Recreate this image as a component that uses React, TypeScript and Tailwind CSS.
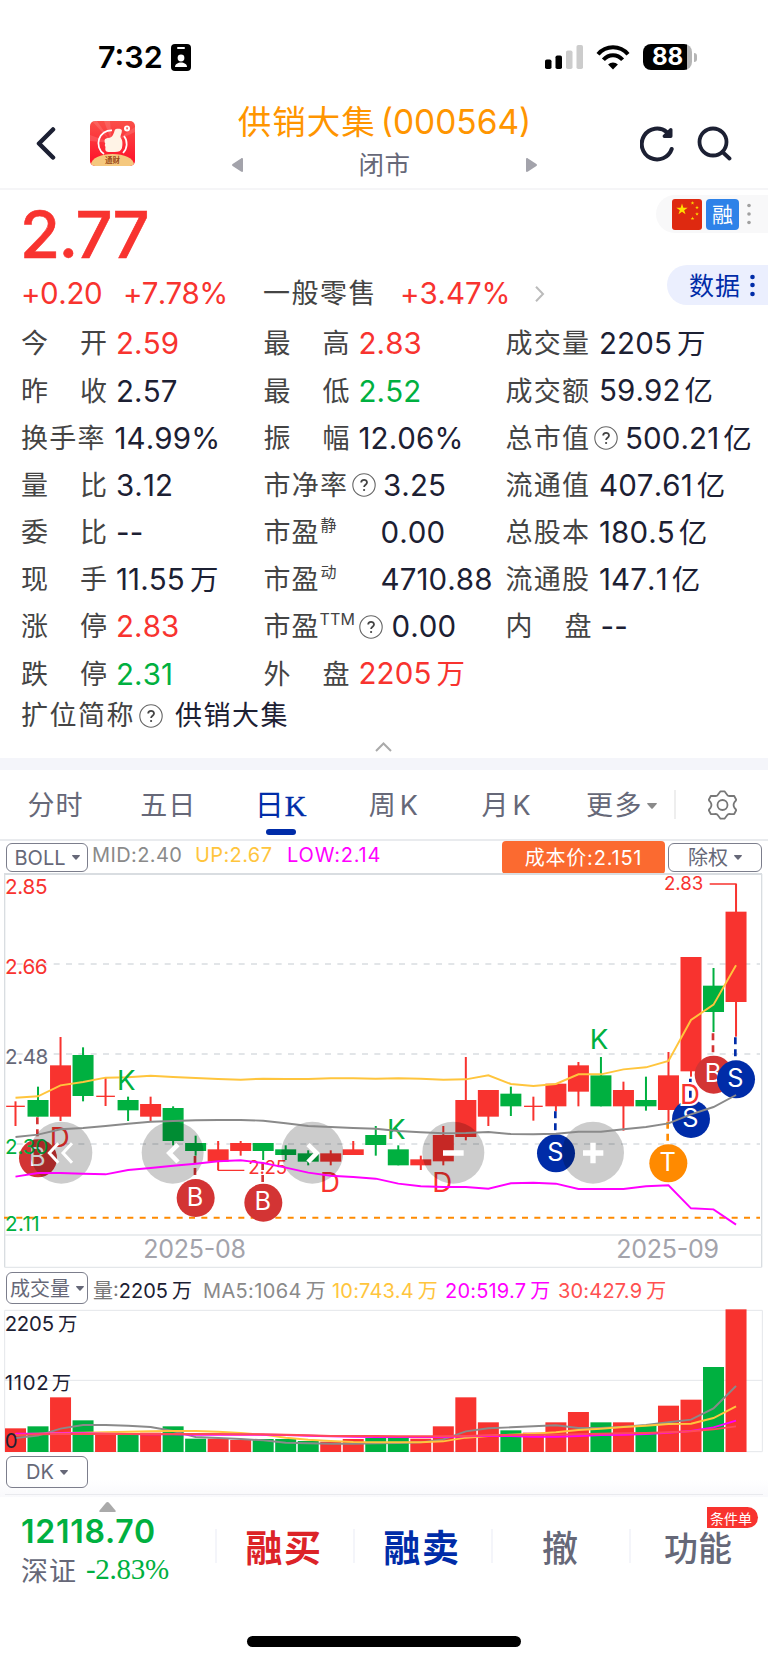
import type { ReactNode } from "react";

const RED = "#f8332f";
const GREEN = "#00b040";
const PITCH = 67.55;
const cx = (i: number) => 46.5 + i * PITCH;

// [up, bodyTop, bodyBottom, high, low]
const candles: [number, number, number, number, number][] = [
  [1, 707, 711, 694, 768], [0, 690, 740, 650, 740], [1, 586, 740, 501, 753], [0, 555, 678, 532, 694],
  [1, 677, 681, 622, 708], [0, 690, 721, 680, 753], [1, 702, 740, 680, 753], [0, 714, 813, 709, 826],
  [0, 819, 843, 797, 857], [1, 838, 875, 813, 900], [1, 819, 843, 813, 857], [0, 819, 843, 819, 870],
  [0, 838, 855, 826, 870], [0, 850, 875, 841, 886], [1, 850, 875, 841, 886], [1, 838, 855, 813, 855],
  [0, 795, 825, 768, 857], [0, 838, 886, 826, 886], [1, 868, 886, 857, 900], [1, 795, 874, 768, 886],
  [1, 690, 801, 561, 811], [1, 660, 740, 660, 768], [0, 671, 709, 650, 738], [1, 707, 711, 680, 752],
  [1, 641, 709, 641, 724], [1, 586, 665, 576, 709], [0, 616, 709, 561, 709], [1, 660, 709, 635, 782],
  [0, 690, 709, 620, 722], [1, 616, 720, 546, 755], [1, 261, 604, 261, 620], [0, 347, 426, 294, 486],
  [1, 125, 396, 42, 500],
];
const up = [683, 679, 646, 636, 623, 622, 617, 621, 624, 627, 629, 626, 627, 627, 625, 625, 626, 625, 626, 629, 628, 616, 642, 648, 642, 613, 613, 598, 592, 573, 450, 404, 286];
const mid = [801, 794, 778, 774, 768, 761, 755, 753, 751, 750, 750, 752, 760, 768, 771, 774, 776, 783, 787, 790, 789, 786, 792, 793, 791, 785, 785, 778, 771, 760, 733, 711, 675];
const low = [920, 909, 909, 911, 913, 900, 894, 887, 881, 874, 871, 879, 893, 908, 917, 921, 926, 941, 949, 951, 951, 956, 940, 938, 941, 957, 957, 957, 949, 946, 1015, 1018, 1064];
const volumes = [505, 499, 412, 481, 518, 525, 518, 499, 536, 536, 540, 537, 537, 543, 545, 537, 534, 534, 536, 499, 412, 487, 511, 518, 487, 456, 487, 487, 498, 437, 419, 321, 148];
const ma5 = [534, 527, 506, 495, 495, 497, 501, 513, 531, 534, 537, 541, 548, 550, 551, 551, 550, 549, 547, 538, 514, 505, 502, 499, 496, 504, 504, 500, 495, 487, 479, 445, 378];
const ma10 = [523, 521, 519, 518, 517, 515, 514, 513, 513, 515, 519, 524, 533, 539, 543, 546, 547, 547, 547, 544, 533, 528, 524, 521, 517, 510, 506, 501, 497, 492, 491, 474, 439];
const ma20 = [521, 521, 520, 520, 521, 522, 523, 523, 524, 524, 524, 524, 525, 527, 529, 530, 531, 531, 531, 531, 529, 527, 528, 530, 530, 528, 525, 524, 522, 518, 513, 502, 482];
const ma30 = [525, 523, 522, 522, 522, 522, 522, 522, 522, 522, 523, 523, 524, 526, 528, 528, 528, 529, 529, 529, 528, 526, 525, 525, 524, 523, 521, 520, 519, 517, 514, 508, 499];

function Series({ data, color }: { data: number[]; color: string }) {
  return <polyline points={data.map((y, i) => `${cx(i)},${y}`).join(" ")} fill="none" stroke={color} strokeWidth={5.8} />;
}

function Label({ x, y, w, size = 62, color, children }: { x: number; y: number; w?: number; size?: number; color: string; children: string }) {
  return (
    <text x={x} y={y} fontSize={size} fill={color} textLength={w} lengthAdjust="spacing">
      {children}
    </text>
  );
}

function Marker({ x, y, color, from, children }: { x: number; y: number; color: string; from?: number; children: string }) {
  return (
    <g>
      {from !== undefined && <line x1={x - 2} x2={x - 2} y1={from} y2={y - 50} stroke={color} strokeWidth={8} strokeDasharray="21 15" />}
      <circle cx={x} cy={y} r={57} fill={color} />
      <text x={x - 2} y={y + 23} fontSize={76} fill="#fff" textAnchor="middle">
        {children}
      </text>
    </g>
  );
}

function PriceChart() {
  const blue = "#002ca8";
  const red = "#d33434";
  const orange = "#ff8a00";
  return (
    <svg className="block h-[400px] w-[768px]" viewBox="0 0 2304 1200">
      <g fill="none" stroke="#d9dde1">
        <path d="M12 12H2286" strokeWidth={6} />
        <path d="M14 12V1192M2285 12V1192" strokeWidth={4} />
        <path d="M14 1095H2285M14 1192H2285" strokeWidth={4} stroke="#e4e7ea" />
        <path d="M50 282H2280M50 552H2280M50 822H2280" strokeWidth={5} strokeDasharray="18 19" />
      </g>
      <path d="M12 1043H2280" stroke={orange} strokeWidth={6} strokeDasharray="18 19" />
      {candles.map(([isUp, t, b, h, l], i) => {
        const w = b - t < 6 ? 56 : 63;
        const c = isUp ? RED : GREEN;
        return (
          <g key={i} fill={c}>
            <rect x={cx(i) - 3} y={h} width={6} height={l - h} />
            <rect x={cx(i) - w / 2} y={t} width={w} height={b - t} />
          </g>
        );
      })}
      <path d="M655 885V901H733M2129 42H2210" fill="none" stroke={RED} strokeWidth={4} />
      <Series data={up} color="#ffc53d" />
      <Label x={15} y={72} w={128} color={RED}>2.85</Label>
      <Label x={15} y={311} w={128} color={RED}>2.66</Label>
      <Label x={15} y={581} w={130} color="#666878">2.48</Label>
      <Label x={15} y={1084} w={104} color={GREEN}>2.11</Label>
      <Label x={1992} y={61} w={118} size={56} color={RED}>2.83</Label>
      <Label x={745} y={913} w={116} size={56} color={RED}>2.25</Label>
      <Marker x={114} y={865} color={red} from={742}>B</Marker>
      <Marker x={587} y={984} color={red} from={858}>B</Marker>
      <Marker x={790} y={998} color={red} from={879}>B</Marker>
      <Marker x={2141} y={614} color={red} from={490}>B</Marker>
      <Marker x={1668} y={850} color={blue} from={724}>S</Marker>
      <Marker x={2073} y={747} color={blue} from={626}>S</Marker>
      <Marker x={2208} y={628} color={blue} from={502}>S</Marker>
      <Marker x={2005} y={880} color={orange} from={755}>T</Marker>
      <Label x={15} y={852} w={130} color={GREEN}>2.30</Label>
      <g fontSize={83} fill={RED} textAnchor="middle">
        <text x={179} y={832}>D</text>
        <text x={990} y={966}>D</text>
        <text x={1327} y={966}>D</text>
        <text x={2070} y={703} stroke="#fff" strokeWidth={12} paintOrder="stroke">D</text>
      </g>
      <g fontSize={83} fill={GREEN} textAnchor="middle">
        <text x={379} y={659}>K</text>
        <text x={1189} y={806}>K</text>
        <text x={1797} y={536}>K</text>
      </g>
      <g fill="#000" fillOpacity={0.2}>
        <circle cx={184} cy={848} r={93} />
        <circle cx={518} cy={848} r={93} />
        <circle cx={937} cy={848} r={93} />
        <circle cx={1360} cy={848} r={93} />
        <circle cx={1779} cy={848} r={93} />
      </g>
      <Series data={mid} color="#8a8a8a" />
      <Series data={low} color="#ff00ff" />
      <g fill="none" stroke="#fff">
        <path d="M175 820L148 849L175 878M216 820L189 849L216 878" strokeWidth={9} />
        <path d="M534 824L508 849L534 876M924 824L950 849L924 876" strokeWidth={14} />
        <path d="M1329 849H1391M1749 849H1810M1779 818V880" strokeWidth={16} />
      </g>
      <Label x={430} y={1163} w={308} size={75} color="#a3a3ab">2025-08</Label>
      <Label x={1849} y={1163} w={308} size={75} color="#a3a3ab">2025-09</Label>
    </svg>
  );
}

function VolumeChart() {
  return (
    <svg className="block h-[145px] w-[768px]" viewBox="0 144 2304 435">
      <path d="M14 575V151H2287V575H14M14 361H2287" fill="none" stroke="#e4e6ea" strokeWidth={3} />
      {volumes.map((t, i) => (
        <rect key={i} x={cx(i) - 31.5} y={t} width={63} height={576 - t} fill={candles[i][0] ? RED : GREEN} />
      ))}
      <Series data={ma5} color="#8a8a8a" />
      <Series data={ma10} color="#ffc53d" />
      <Series data={ma20} color="#ff00ff" />
      <Series data={ma30} color="#ff4a5a" />
      <Label x={14} y={213} w={148} size={61} color="#1c2033">2205</Label>
      <Label x={174} y={213} size={58} color="#1c2033">万</Label>
      <Label x={14} y={391} w={132} size={61} color="#1c2033">1102</Label>
      <Label x={155} y={391} size={58} color="#1c2033">万</Label>
      <Label x={14} y={563} size={61} color="#1c2033">0</Label>
    </svg>
  );
}

function Help() {
  return (
    <svg className="h-6 w-6 shrink-0" viewBox="0 0 24 24" fill="none" stroke="#666">
      <circle cx="12" cy="12" r="11.2" strokeWidth="1.1" />
      <path d="M9.2 9.6c0-3.600 5.800-3.600 5.800-.1 0 2.200-2.900 2.400-2.900 4.600" stroke="#444" strokeWidth="1.8" />
      <circle cx="12.1" cy="17" r="1.1" fill="#444" stroke="none" />
    </svg>
  );
}

function Caret({ className = "h-[6px] w-[10px]", color = "#666878" }: { className?: string; color?: string }) {
  return (
    <svg className={`shrink-0 ${className}`} viewBox="0 0 10 6">
      <path d="M.7 0h8.6c.6 0 .8.6.4 1L5.7 5.4a1 1 0 0 1-1.4 0L.3 1C-.1.6.1 0 .7 0z" fill={color} />
    </svg>
  );
}

type Cell = { label: string; sup?: string; help?: boolean; value: string; unit?: string; color?: string; pad?: string };
const r = "text-[#f8332f]";
const g = "text-[#00b040]";
const rows: Cell[][] = [
  [{ label: "今开", value: "2.59", color: r }, { label: "最高", value: "2.83", color: r }, { label: "成交量", value: "2205", unit: "万" }],
  [{ label: "昨收", value: "2.57" }, { label: "最低", value: "2.52", color: g }, { label: "成交额", value: "59.92", unit: "亿" }],
  [{ label: "换手率", value: "14.99%", pad: "pl-[10px]" }, { label: "振幅", value: "12.06%" }, { label: "总市值", help: true, value: "500.21", unit: "亿", pad: "pl-[7px]" }],
  [{ label: "量比", value: "3.12" }, { label: "市净率", help: true, value: "3.25", pad: "pl-[7px]" }, { label: "流通值", value: "407.61", unit: "亿" }],
  [{ label: "委比", value: "--" }, { label: "市盈", sup: "静", value: "0.00", pad: "pl-[43px]" }, { label: "总股本", value: "180.5", unit: "亿" }],
  [{ label: "现手", value: "11.55", unit: "万" }, { label: "市盈", sup: "动", value: "4710.88", pad: "pl-[43px]" }, { label: "流通股", value: "147.1", unit: "亿" }],
  [{ label: "涨停", value: "2.83", color: r }, { label: "市盈", sup: "TTM", help: true, value: "0.00", pad: "pl-[9px]" }, { label: "内盘", value: "--" }],
  [{ label: "跌停", value: "2.31", color: g }, { label: "外盘", value: "2205", unit: "万", color: r }],
];

function Quote({ c }: { c: Cell }) {
  const wide = c.label.length === 3;
  return (
    <div className="flex items-center whitespace-nowrap">
      {c.sup ? (
        <div className="flex pt-[2px]">
          <span className="text-[27px] tracking-[1px] text-[#444]">{c.label}</span>
          <span className={c.sup === "TTM" ? "w-[39px] text-[16px] tracking-[0.2px] text-[#444]" : "ml-[1px] w-[17px] text-[16px] text-[#444]"}>{c.sup}</span>
        </div>
      ) : (
        <div className={`flex justify-between pt-[2px] text-[27px] text-[#444] ${wide ? "w-[83.500px]" : "w-[86px]"}`}>
          {c.label.split("").map((ch) => (
            <span key={ch}>{ch}</span>
          ))}
        </div>
      )}
      {c.help && <span className={c.sup ? "flex" : "ml-[5px] flex"}><Help /></span>}
      <span className={`text-[29.500px] tracking-[0.100px] [font-kerning:none] ${c.color ?? "text-[#1c2033]"} ${c.pad ?? (wide ? "pl-[10px]" : "pl-[9px]")}`}>
        {c.value}
        {c.unit && <span className={`text-[28.500px] ${c.unit === "万" ? "ml-[5px]" : "ml-[4px]"}`}>{c.unit}</span>}
      </span>
    </div>
  );
}

function Select({ className, children }: { className: string; children: ReactNode }) {
  return (
    <div className={`flex shrink-0 items-center justify-center gap-[6px] rounded-[6px] border-[1.5px] border-[#7c7e8c] text-[20px] text-[#666878] ${className}`}>
      <span className="whitespace-nowrap">{children}</span>
      <Caret className="h-[5px] w-[8px]" />
    </div>
  );
}

function Tab({ children, active }: { children: ReactNode; active?: boolean }) {
  return (
    <div className={`flex h-full w-[112.8px] flex-col items-center ${active ? "text-[#002ca8]" : "text-[#666878]"}`}>
      <span className="mt-[15px] h-[42px] whitespace-nowrap text-[27px] leading-[42px] tracking-[1px]">{children}</span>
      {active && <span className="mt-[2px] h-[6px] w-[30px] shrink-0 rounded-[3px] bg-[#002ca8]" />}
    </div>
  );
}

function Unit() {
  return <span className="ml-[4px]">万</span>;
}

function Star({ x, y, s }: { x: number; y: number; s: number }) {
  return <path transform={`translate(${x} ${y}) scale(${s})`} d="M0-1L.225-.309.951-.309.363.118.588.809 0 .382-.588.809-.363.118-.951-.309-.225-.309z" fill="#ffde00" />;
}

export default function App() {
  return (
    <div className="flex h-[1663px] w-[768px] flex-col overflow-hidden bg-white font-['Inter','Noto_Sans_CJK_SC',sans-serif]">
      {/* Status bar */}
      <div className="flex h-[96px] shrink-0 items-center pl-[98px] pt-[18px]">
        <span className="w-[73px] whitespace-nowrap text-[30.500px] font-semibold text-black">7:32</span>
        <svg className="h-[27px] w-[20px]" viewBox="0 0 20 27">
          <rect width="20" height="27" rx="4" fill="#000" />
          <rect x="6" y="3" width="8" height="2" rx="1" fill="#fff" />
          <circle cx="10" cy="14" r="3.4" fill="#fff" />
          <path d="M4 23c0-6 12-6 12 0z" fill="#fff" />
        </svg>
        <svg className="ml-[354px] h-[24px] w-[38px]" viewBox="0 0 38 24">
          <rect x="0" y="14.500" width="6.500" height="9.500" rx="1.800" />
          <rect x="10.500" y="10.500" width="6.500" height="13.500" rx="1.800" />
          <rect x="21" y="5.500" width="6.500" height="18.500" rx="1.800" fill="#ccc" />
          <rect x="31.500" y="0" width="6.500" height="24" rx="1.800" fill="#ccc" />
        </svg>
        <svg className="ml-[13px] h-[25px] w-[34px]" viewBox="0 0 34 25">
          <g fill="none" stroke="#000" strokeWidth="4">
            <path d="M2 9.200C10-.1 24-.1 32 9.200" />
            <path d="M7.400 14.700c5.300-6 13.900-6 19.200 0" />
          </g>
          <path d="M17 24.500l-4.900-5c2.600-2.700 7.200-2.700 9.800 0z" />
        </svg>
        <div className="ml-[13px] flex h-[26px] w-[49px] items-center justify-center rounded-[8px] bg-[linear-gradient(to_right,#000_89%,#b5b5b5_89%)] text-[24px] font-bold leading-none text-white">88</div>
        <div className="ml-[2px] h-[9px] w-[3px] rounded-r-full bg-[#b5b5b5]" />
      </div>

      {/* Header */}
      <div className="flex h-[94px] shrink-0 border-b-2 border-[#f5f5f7]">
        <div className="flex w-[232px] pl-[36px] pt-[25px]">
          <svg className="mt-[5px] h-[35px] w-[21px]" viewBox="0 0 21 35" fill="none" stroke="#1c2033" strokeWidth="4.500" strokeLinecap="round" strokeLinejoin="round">
            <path d="M17 3.500L3 17.500 17 31.500" />
          </svg>
          <svg className="ml-[33px] h-[45px] w-[45px]" viewBox="0 0 45 45">
            <defs>
              <linearGradient id="logo" x2="0" y2="1"><stop stopColor="#fa5048" /><stop offset="1" stopColor="#ff0d28" /></linearGradient>
              <clipPath id="clip"><rect width="45" height="45" rx="5" /></clipPath>
            </defs>
            <g clipPath="url(#clip)">
              <rect width="45" height="45" fill="url(#logo)" />
              <path d="M22 22L2 0h5zM22 22L14 0h6zM22 22L45 6v5zM22 22L0 14v6z" fill="#fff" opacity=".13" />
              <path d="M22 9.300A13 13 0 0 0 14 33M34 15a13 13 0 0 1-1 17" fill="none" stroke="#fff" strokeWidth="1.700" />
              <path d="M14.500 19.500c0-2 2.500-2.800 5-2.800 4.500-.6 4.500-7.500 6-8.400 2-.8 5.300-.6 6.300.7.500 2.800-2 6-1 8 2 2 2 7 1 10.500-1 2.500-3 3.500-7 3.500-5 0-9.500 1-9.500-3 0-1 .3-1.500 0-2.500-.7-1-.6-2 0-2.800-.8-1.200-.6-2-.8-3.200z" fill="#fff3e6" />
              <circle cx="37" cy="7.500" r="3" fill="#fff" />
              <path d="M36 6.500h2.200L37 9z" fill="#f33" />
              <ellipse cx="22.500" cy="43.500" rx="21.500" ry="10.500" fill="#f5c87e" />
            </g>
            <text x="22.500" y="41.500" fontSize="7.500" fontWeight="700" textAnchor="middle" fill="#9a4a18">通财</text>
          </svg>
        </div>
        <div className="flex w-[305px] flex-col">
          <div className="flex h-[53px] items-center justify-center whitespace-nowrap text-[#ff9500]">
            <span className="text-[33.500px] tracking-[1px]">供销大集</span>
            <span className="ml-[5px] text-[33.500px]">(000564)</span>
          </div>
          <div className="flex h-[32px] items-center justify-between">
            <svg className="h-[14px] w-[11px]" viewBox="0 0 11 14"><path d="M11 1v12c0 1-1 1.200-2 .6L.6 8a1.300 1.300 0 0 1 0-2L9 .4c1-.6 2-.4 2 .6z" fill="#a3a3ab" /></svg>
            <span className="text-[25.500px] tracking-[0.500px] text-[#666878]">闭市</span>
            <svg className="h-[14px] w-[11px]" viewBox="0 0 11 14"><path d="M0 1v12c0 1 1 1.200 2 .6L10.400 8a1.300 1.300 0 0 0 0-2L2 .4C1-.2 0 0 0 1z" fill="#a3a3ab" /></svg>
          </div>
        </div>
        <div className="flex flex-1 pl-[103px] pt-[29px]">
          <svg className="h-[37px] w-[36px]" viewBox="0 0 36 37" fill="none" stroke="#1c2033" strokeWidth="4" strokeLinecap="round">
            <path d="M31.700 24A15.400 15.400 0 1 1 27 7.200" />
            <path d="M30.800 4.800v6.400h-6.500z" strokeLinejoin="round" fill="#1c2033" strokeWidth="3.400" />
          </svg>
          <svg className="ml-[20px] h-[37px] w-[36px]" viewBox="0 0 36 37" fill="none" stroke="#1c2033" strokeWidth="3.800" strokeLinecap="round">
            <circle cx="17" cy="17" r="13.500" />
            <path d="M26.500 27l7 6.500" />
          </svg>
        </div>
      </div>

      {/* Quote summary */}
      <div className="flex h-[131px] shrink-0 justify-between">
        <div className="flex flex-col">
          <div className="flex h-[87px] items-center pl-[20px] pt-[2px] text-[65px] font-medium leading-none tracking-[-1.500px] text-[#f8332f] [-webkit-text-stroke:0.600px_#f8332f]">2.77</div>
          <div className="flex h-[32px] items-center whitespace-nowrap pl-[21px] text-[29.500px] tracking-[-0.100px] text-[#f8332f] [font-kerning:none]">
            <span className="w-[102px] tracking-[-0.400px]">+0.20</span>
            <span className="w-[140px] tracking-[-0.700px]">+7.78%</span>
            <span className="w-[137px] pt-[2px] text-[27px] tracking-[1.500px] text-[#444]">一般零售</span>
            <span className="w-[135px]">+3.47%</span>
            <svg className="mt-[2px] h-[16px] w-[10px]" viewBox="0 0 10 16" fill="none" stroke="#bbb" strokeWidth="2"><path d="M1 .7L8 8l-7 7.300" /></svg>
          </div>
        </div>
        <div className="flex flex-col items-end pt-[5px]">
          <div className="flex h-[38px] w-[112px] items-center rounded-l-full bg-[#f8f8f9] pl-[16px]">
            <svg className="h-[31px] w-[30px]" viewBox="0 0 30 31">
              <rect width="30" height="31" rx="3" fill="#de2910" />
              <Star x={10} y={10.500} s={6} /><Star x={20.500} y={4} s={2} /><Star x={25} y={8.500} s={2} /><Star x={25} y={15} s={2} /><Star x={20.500} y={19.500} s={2} />
            </svg>
            <span className="ml-[4px] flex h-[31px] w-[33px] items-center justify-center rounded-[4px] bg-[#2e82e8] pt-px text-[21px] text-white">融</span>
            <svg className="ml-[8px] h-[22px] w-[4px]" viewBox="0 0 4 22" fill="#a0a0a0"><circle cx="2" cy="2.500" r="1.800" /><circle cx="2" cy="11" r="1.800" /><circle cx="2" cy="19.500" r="1.800" /></svg>
          </div>
          <div className="mt-[32px] flex h-[40px] w-[101px] items-center rounded-l-full bg-[#ebeffe] pl-[22px] text-[25px] tracking-[1px] text-[#002ca8]">
            <span className="w-[61px] pt-[3px]">数据</span>
            <svg className="h-[24px] w-[5px]" viewBox="0 0 5 24" fill="#002ca8"><circle cx="2.500" cy="4" r="2.300" /><circle cx="2.500" cy="12" r="2.300" /><circle cx="2.500" cy="21" r="2.300" /></svg>
          </div>
        </div>
      </div>

      {/* Quote table */}
      <div className="-mt-px grid shrink-0 auto-rows-[47.180px] grid-cols-[242.500px_242px_1fr] pl-[21px]">
        {rows.flat().map((c) => (
          <Quote key={c.label + (c.sup ?? "")} c={c} />
        ))}
      </div>
      <div className="flex h-[35px] shrink-0 items-center pl-[21px] pt-[2px] text-[27px] tracking-[1.500px] text-[#444]">
        <span>扩位简称</span>
        <span className="ml-[4px] mr-[12px] flex"><Help /></span>
        <span className="text-[#1c2033]">供销大集</span>
      </div>
      <div className="flex h-[26px] shrink-0 items-center justify-center">
        <svg className="mr-[2px] mt-[4px] h-[10px] w-[17px]" viewBox="0 0 17 10" fill="none" stroke="#aaa" strokeWidth="2"><path d="M1 9l7.500-7.500L16 9" /></svg>
      </div>
      <div className="h-[12px] shrink-0 bg-[#f4f5fa]" />

      {/* Period tabs */}
      <div className="-ml-px flex h-[71px] shrink-0 items-center border-b-2 border-[#e9ebee]">
        <Tab>分时</Tab>
        <Tab>五日</Tab>
        <Tab active><span className="text-[29px]">日</span><span className="font-['Liberation_Serif',serif] text-[30px] [-webkit-text-stroke:0.400px_#002ca8]">K</span></Tab>
        <Tab>周<span className="ml-[3px]">K</span></Tab>
        <Tab>月<span className="ml-[3px]">K</span></Tab>
        <div className="flex items-center gap-[4px] pl-[23px] pt-[2px] text-[27px] tracking-[1.500px] text-[#666878]">更多<Caret color="#8a8a8a" /></div>
        <div className="ml-[17px] h-[29px] w-[2px] bg-[#eee]" />
        <svg className="ml-[32px] h-[30px] w-[29px]" viewBox="0 0 29 30" fill="none" stroke="#777" strokeWidth="1.800" strokeLinejoin="round">
          <path d="M12.500 1.300h4l3.200 4.200c1 .6 1.900.7 3 .3l3.500.2 2 3.700c-.1.800-.6 1.500-1.600 2.300-1.100 1.600-1.100 4.400 0 6 1 .8 1.500 1.500 1.600 2.300l-2 3.700-3.500.2c-1.100-.4-2-.3-3 .3l-3.200 4.200h-4l-3.200-4.200c-1-.6-1.900-.7-3-.3l-3.500-.2-2-3.700c.1-.8.600-1.500 1.600-2.300 1.100-1.600 1.100-4.400 0-6C1.400 11.200.9 10.500.8 9.700l2-3.700 3.500-.2c1.100.4 2 .3 3-.3z" />
          <circle cx="14.500" cy="15" r="5" />
        </svg>
      </div>

      {/* Indicator row */}
      <div className="flex h-[29px] shrink-0 pl-[6px]">
        <Select className="mt-[2px] h-[29px] w-[82px]">BOLL</Select>
        <div className="flex h-[27px] w-[414px] items-center whitespace-nowrap pl-[4px] text-[20px] tracking-[0.400px]">
          <span className="w-[103px] text-[#8a8a8a]">MID:2.40</span>
          <span className="w-[92px] text-[#ffc53d]">UP:2.67</span>
          <span className="tracking-[0.800px] text-[#ff00ff]">LOW:2.14</span>
        </div>
        <div className="flex h-[33px] w-[163px] shrink-0 items-center justify-center rounded-[4px] bg-[#fb6a30] text-[20px] tracking-[0.800px] text-white">成本价:2.151</div>
        <Select className="ml-[3px] mt-[2px] h-[29px] w-[94px]">除权</Select>
      </div>

      <div className="h-[400px] shrink-0"><PriceChart /></div>

      {/* Volume */}
      <div className="flex h-[38px] shrink-0 pl-[6px] pt-[2px]">
        <Select className="h-[32px] w-[82px]"><span className="relative top-px">成交量</span></Select>
        <div className="flex h-[38px] items-center whitespace-nowrap pl-[5px] text-[20px] tracking-[0.200px]">
          <span className="w-[110px] tracking-normal text-[#1c2033]"><span className="text-[#777]">量:</span>2205<Unit /></span>
          <span className="w-[129px] tracking-[0.350px] text-[#8a8a8a]">MA5:1064<Unit /></span>
          <span className="w-[113px] text-[#ffc53d]">10:743.4<Unit /></span>
          <span className="w-[113px] text-[#ff00ff]">20:519.7<Unit /></span>
          <span className="text-[#ff5050]">30:427.9<Unit /></span>
        </div>
      </div>
      <VolumeChart />
      <div className="h-[44px] shrink-0 bg-gradient-to-b from-white from-60% to-[#f9f9fc] pl-[5px] pr-[5px] pt-[3px]">
        <Select className="ml-px h-[32px] w-[82px]">DK</Select>
        <div className="mt-[6px] h-px bg-[#e9eaee]" />
      </div>

      {/* Trade bar */}
      <div className="flex h-[119px] shrink-0 bg-white">
        <div className="flex w-[215px] flex-col pl-[21px]">
          <svg className="ml-[78px] mt-[5px] h-[10px] w-[17px]" viewBox="0 0 17 10"><path d="M8.500 0c.7 0 1 .3 1.500.8l6.500 7.700c.6.800.3 1.500-.7 1.500H1.200C.2 10-.1 9.300.5 8.500L7 .8C7.500.3 7.800 0 8.500 0z" fill="#aaa" /></svg>
          <span className="mt-px h-[37px] text-[32px] font-semibold leading-[37px] tracking-[0.750px] text-[#00b040]">12118.70</span>
          <div className="flex h-[40px] items-center whitespace-nowrap">
            <span className="w-[65px] pt-[4px] text-[27px] tracking-[1px] text-[#666878]">深证</span>
            <span className="-mt-[2px] font-['Liberation_Serif',serif] text-[29px] tracking-[-0.300px] text-[#00b040]">-2.83%</span>
          </div>
        </div>
        <div className="mt-[32px] flex h-[34px] flex-1 items-center text-[36px]">
          <div className="flex h-full w-[138px] items-center justify-center border-l-2 border-[#f4f5fa] pr-[2px] pt-[5px] text-[37px] font-bold tracking-[1.500px] text-[#dc2328]">融买</div>
          <div className="flex h-full w-[138px] items-center justify-center border-l-2 border-[#f4f5fa] pr-[2px] pt-[5px] text-[37px] font-bold tracking-[1.500px] text-[#002ca8]">融卖</div>
          <div className="flex h-full w-[138px] items-center justify-center border-l-2 border-[#f4f5fa] pr-[2px] pt-[5px] font-medium text-[#666878]">撤</div>
          <div className="relative flex h-full flex-1 items-center justify-center border-l-2 border-[#f4f5fa] pr-[3px] pt-[4px] text-[34px] font-medium text-[#666878]">
            功能
            <span className="absolute -top-[22px] right-[10px] flex h-[21px] w-[51px] items-center justify-center rounded-r-full rounded-tl-[8px] bg-[#f8332f] pr-[3px] pt-px text-[14px] font-normal text-white">条件单</span>
          </div>
        </div>
      </div>
      <div className="flex flex-1 justify-center pt-[20px]">
        <div className="h-[11px] w-[274px] rounded-full bg-black" />
      </div>
    </div>
  );
}
